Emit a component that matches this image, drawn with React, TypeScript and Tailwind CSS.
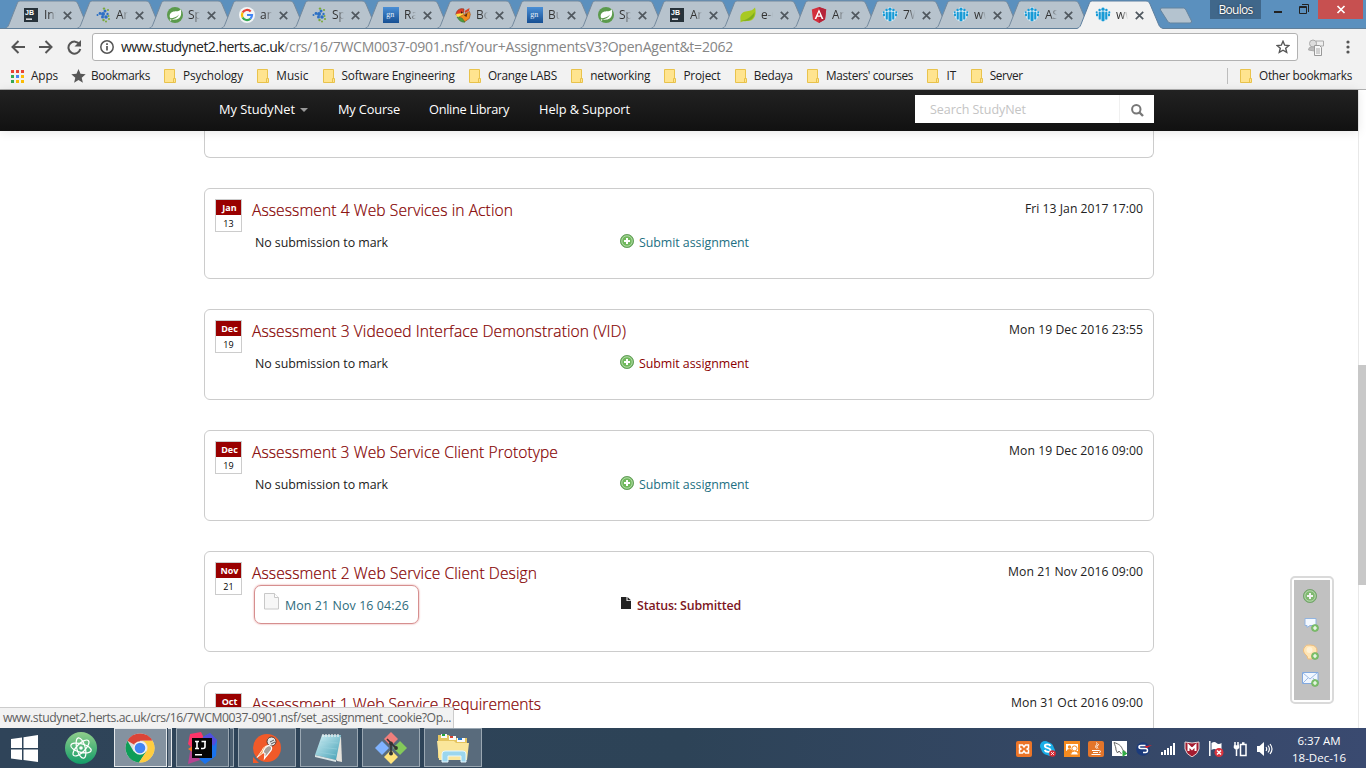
import React, { useLayoutEffect, useRef, useState } from "react";

/* Single line of text whose tracking is adjusted so that it fills the given width. */
function Fit({ w, children, className = "" }: { w: number; children: string; className?: string }) {
  const ref = useRef<HTMLSpanElement>(null);
  const [ls, setLs] = useState(0);
  useLayoutEffect(() => {
    const el = ref.current;
    if (el) setLs((w - el.getBoundingClientRect().width) / children.length);
  }, []);
  return (
    <span className={`block shrink-0 whitespace-pre ${className}`} style={{ width: w }}>
      <span ref={ref} className="inline-block" style={{ letterSpacing: ls }}>{children}</span>
    </span>
  );
}

const JetBrains = () => (
  <svg width="16" height="16" viewBox="0 0 16 16">
    <rect x="1" y="1" width="14" height="14" fill="#27323a" />
    <text x="2" y="7.6" fontSize="7" fontWeight="700" fill="#fff" fontFamily="Liberation Sans, sans-serif">JB</text>
    <rect x="3" y="11.5" width="6" height="1.3" fill="#fff" />
  </svg>
);
const Dots = () => (
  <svg width="16" height="16" viewBox="0 0 16 16">
    <g fill="#2c6fc4">
      <circle cx="8" cy="7" r="2" /><circle cx="11" cy="10" r="1.8" /><circle cx="5" cy="6.5" r="1.4" /><circle cx="10" cy="4" r="1.5" /><circle cx="7.5" cy="10" r="1.5" /><circle cx="12.5" cy="7" r="1.2" /><circle cx="2.5" cy="8" r="1" />
    </g>
    <g fill="#7ba83c">
      <circle cx="9" cy="1.6" r="1.2" /><circle cx="13" cy="3" r="1.1" /><circle cx="14" cy="12" r="1.1" /><circle cx="8.5" cy="13" r="1.2" /><circle cx="11" cy="14.6" r="1" /><circle cx="13.5" cy="9" r="1" />
    </g>
  </svg>
);
const Spring = () => (
  <svg width="16" height="16" viewBox="0 0 16 16">
    <circle cx="8" cy="8" r="8" fill="#5b9a4c" />
    <path d="M13.7 2.2C14.6 6 14.4 9.4 11.6 11.5 9.4 13 6.300 12.700 3.700 12.500 8 12.100 10.800 10.400 12 7.400 9.700 10.100 6.500 11 3.400 11.300 1.700 8.500 3.300 5.200 6.400 4.500 9.100 4 11.900 4.800 13.700 2.200Z" fill="#fff" />
    <circle cx="3.5" cy="13" r=".8" fill="#fff" />
  </svg>
);
const Google = () => (
  <svg width="16" height="16" viewBox="0 0 16 16">
    <circle cx="8" cy="8" r="8" fill="#f4f6f7" />
    <g fill="none" strokeWidth="2.2">
      <path d="M11.700 4.600A5 5 0 0 0 3.600 5.600" stroke="#ea4335" />
      <path d="M3.600 5.600A5 5 0 0 0 3.600 10.400" stroke="#fbbc05" />
      <path d="M3.600 10.400A5 5 0 0 0 11.400 11.700" stroke="#34a853" />
      <path d="M11.400 11.700A5 5 0 0 0 13 8H8" stroke="#4285f4" />
    </g>
  </svg>
);
const Gn = () => (
  <svg width="16" height="16" viewBox="0 0 16 16">
    <defs><linearGradient id="gn" x2="0" y2="1"><stop stopColor="#4a8fd6" /><stop offset="1" stopColor="#164f93" /></linearGradient></defs>
    <rect width="16" height="16" fill="url(#gn)" />
    <text x="3.200" y="10" fontSize="8" fill="#e4eef8" fontFamily="Liberation Serif, serif">gn</text>
  </svg>
);
const Bird = () => (
  <svg width="16" height="16" viewBox="0 0 16 16">
    <path d="M1 8a6 6 0 0 1 8-6L8 7Z" fill="#e03a24" stroke="#8a3a22" strokeWidth=".7" />
    <path d="M1 7l7-1 1 3-7 1Z" fill="#ffe04a" />
    <path d="M4 10L14.500 4.500l.8 3-1 4-5 3.500Z" fill="#f28c1e" stroke="#a14a14" strokeWidth=".6" />
    <path d="M9.500 4l5-3-.5 3-4 2Z" fill="#d94324" />
    <path d="M2 10l5 1 3 4q-5 1-8-5Z" fill="#4f9a3c" stroke="#3b6a2c" strokeWidth=".5" />
    <path d="M9 8.500l3.500-2.500-1 4Z" fill="#5a2c13" />
    <path d="M6 4l2 2-2 .5Z" fill="#3b1c10" />
  </svg>
);
const Leaf = () => (
  <svg width="16" height="16" viewBox="0 0 16 16">
    <path d="M.5 13C-.5 7 3 4.600 7 4.300 11 4 13 3 15 .6 16.500 6 15.500 13.500 8 14 4 14.300 2.500 14 .5 15.400Z" fill="#a8c922" />
    <path d="M1 14C6 13 11 10.500 14.500 5c.5 5-3 8.600-8 8.800Z" fill="#7fae1f" />
  </svg>
);
const Angular = () => (
  <svg width="16" height="16" viewBox="0 0 16 16">
    <path d="M8 0l7.200 2.600L14 12.400 8 16 2 12.400.8 2.600Z" fill="#d32f3c" />
    <path d="M8 0l7.200 2.600L14 12.400 8 16Z" fill="#b5243a" />
    <path d="M8 2.200L3.600 12h1.700l.9-2.200h3.600l.9 2.200h1.700ZM8 5.200l1.300 3.200H6.700Z" fill="#fff" />
  </svg>
);
const People = () => (
  <svg width="16" height="16" viewBox="0 0 16 16">
    <g fill="#dcecf5">
      <circle cx="8" cy="8" r="6.500" /><circle cx="8" cy="2.400" r="2.400" /><circle cx="1.800" cy="6" r="1.800" /><circle cx="14.200" cy="6" r="1.800" />
    </g>
    <g fill="#169ad6">
      <circle cx="8" cy="2.200" r="1.600" /><circle cx="4.600" cy="3" r="1.200" /><circle cx="11.400" cy="3" r="1.200" />
      <rect x="6.500" y="4.400" width="3" height="9.800" rx="1" /><rect x="3.700" y="4.800" width="2.100" height="7.800" rx=".9" /><rect x="10.200" y="4.800" width="2.100" height="7.800" rx=".9" />
      <circle cx="1.700" cy="5.300" r="1" /><circle cx="14.300" cy="5.300" r="1" /><rect x="1" y="6.600" width="2" height="2.600" rx=".7" /><rect x="13" y="6.600" width="2" height="2.600" rx=".7" />
    </g>
  </svg>
);

const tabs: [React.FC, string][] = [
  [JetBrains, "Intr"], [Dots, "Are"], [Spring, "Spr"], [Google, "ang"], [Dots, "Spr"], [Gn, "Rar"], [Bird, "Boc"], [Gn, "Bui"],
  [Spring, "Spr"], [JetBrains, "Ang"], [Leaf, "e-C"], [Angular, "Ang"], [People, "7W"], [People, "ww"], [People, "ASs"], [People, "ww"],
];

function Tab({ Icon, text, active, wide }: { Icon: React.FC; text: string; active: boolean; wide: boolean }) {
  return (
    <div className={`relative flex h-[29px] shrink-0 items-center pl-[16px] ${wide ? "w-[72px]" : "w-[71px]"} ${active ? "z-10" : ""}`}>
      <svg className="absolute top-0 left-[-3px]" width="89" height="29" viewBox="0 0 89 29">
        <path d="M1 28.500C4 27.500 4.500 25.500 5.500 23L13 4C13.600 2 14.500 1 16.500 1H70C72 1 73 2 74 4L82 23C83 25.500 83.500 27.500 87 28.500V29H1Z" fill={active ? "#f2f2f2" : "#b7c3cd"} />
        <path d="M1 28.500C4 27.500 4.500 25.500 5.500 23L13 4C13.600 2 14.500 1 16.500 1H70C72 1 73 2 74 4L82 23C83 25.500 83.500 27.500 87 28.500" fill="none" stroke={active ? "#5d7f9f" : "#74899d"} />
        {!active && <path d="M0 28.500H89" stroke="#617f99" />}
      </svg>
      <span className="relative mt-px flex"><Icon /></span>
      <span className="relative ml-[5px] w-[12px] overflow-hidden text-[12px] whitespace-nowrap text-[#333] [mask-image:linear-gradient(to_right,#000_45%,transparent)]">{text}</span>
      <svg className="relative mt-px ml-[7px] shrink-0" width="9" height="9" viewBox="0 0 9 9"><path d="M.8.8l7.400 7.400M8.200.8L.8 8.200" stroke="#50585f" strokeWidth="1.700" /></svg>
    </div>
  );
}

function TabStrip() {
  return (
    <div className="relative flex h-[29px] bg-[#5b90be] pl-[7px] shadow-[inset_0_-1px_0_#617f99]">
      {tabs.map(([Icon, text], i) => <Tab key={i} Icon={Icon} text={text} active={i === 15} wide={i < 7} />)}
      <svg className="mt-[7px] ml-[9px] shrink-0" width="35" height="18" viewBox="0 0 35 18">
        <path d="M3 1H24.500Q26 1 27 3L32.500 14Q33 16 31 16H11.500Q9.500 16 8.500 14L1.500 3Q.5 1 3 1Z" fill="#b4c3cf" stroke="#65849f" />
      </svg>
      <div className="ml-auto flex shrink-0">
        <div className="flex h-[19px] w-[51px] justify-center bg-[#40678a] text-[12px] leading-[19px] text-white [text-shadow:0_0_2px_#222]"><Fit w={34}>Boulos</Fit></div>
        <svg width="57" height="19" viewBox="0 0 57 19">
          <path d="M13 12h8" stroke="#222" strokeWidth="2" />
          <path d="M38.500 6.500h7v7h-7zM38.500 7.500h7M41 4.500h6.500v7.500" fill="none" stroke="#222" />
        </svg>
        <svg className="mr-[3px] bg-[#c75050]" width="45" height="19" viewBox="0 0 45 19"><path d="M19.500 6l7 7M26.500 6l-7 7" stroke="#fff" strokeWidth="1.700" /></svg>
      </div>
    </div>
  );
}

function Toolbar() {
  return (
    <div className="flex h-[35px] items-center pt-[1px] pl-[11px]">
      <svg width="14" height="14" viewBox="0 0 14 14"><path d="M14 7H1.500M7.500 1L1.500 7l6 6" fill="none" stroke="#555" strokeWidth="2" /></svg>
      <svg className="ml-[14px]" width="14" height="14" viewBox="0 0 14 14"><path d="M0 7h12.500M6.500 1l6 6-6 6" fill="none" stroke="#555" strokeWidth="2" /></svg>
      <svg className="ml-[14px]" width="15" height="15" viewBox="0 0 15 15"><path d="M12.600 4.500A6 6 0 1 0 13.300 9" fill="none" stroke="#555" strokeWidth="2" /><path d="M14 0v6.500H7.500Z" fill="#555" /></svg>
      <div className="ml-[10px] flex h-[28px] w-[1206px] items-center rounded-[3px] border border-[#b2b2b2] bg-white pl-[7px]">
        <svg width="14" height="14" viewBox="0 0 14 14"><circle cx="7" cy="7" r="6.200" fill="none" stroke="#555" strokeWidth="1.500" /><path d="M7 6v4.500M7 3.300v1.600" stroke="#555" strokeWidth="1.700" /></svg>
        <Fit w={163} className="ml-[7px] text-[14px] leading-[20px] text-[#222]">www.studynet2.herts.ac.uk</Fit>
        <Fit w={449} className="text-[14px] leading-[20px] text-[#858585]">/crs/16/7WCM0037-0901.nsf/Your+AssignmentsV3?OpenAgent&t=2062</Fit>
        <svg className="mr-[7px] ml-auto" width="14" height="14" viewBox="0 0 14 14"><path d="M7 1.300l1.700 3.900 4.200.3-3.200 2.700 1 4.200L7 10.200l-3.700 2.200 1-4.200L1.100 5.500l4.200-.3Z" fill="none" stroke="#555" strokeWidth="1.400" /></svg>
      </div>
      <svg className="ml-[10px]" width="17" height="17" viewBox="0 0 17 17">
        <path d="M8 2h7.500v5H8z" fill="#eee" stroke="#aaa" /><circle cx="5" cy="4.500" r="3.500" fill="#ddd" stroke="#aaa" />
        <path d="M.5 11q0-3 3-3h3v4Z" fill="#bbb" stroke="#aaa" /><path d="M6.500 6.500h5l2 2v8h-7z" fill="#f7f7f7" stroke="#999" /><path d="M8 10h4M8 12h4M8 14h4" stroke="#aaa" />
      </svg>
      <svg className="ml-[21px]" width="4" height="14" viewBox="0 0 4 14" fill="#555"><circle cx="2" cy="2" r="1.600" /><circle cx="2" cy="7" r="1.600" /><circle cx="2" cy="12" r="1.600" /></svg>
    </div>
  );
}

const Folder = () => (
  <svg className="mt-px mr-[7px] shrink-0" width="12" height="14" viewBox="0 0 12 14"><path d="M.5.5h10v9h1v4H.5Z" fill="#ffe48f" stroke="#e9c34c" /><path d="M9.500 13V9.500h1.500" fill="none" stroke="#e9c34c" /></svg>
);
const marks: [string, number][] = [["Psychology", 60], ["Music", 32], ["Software Engineering", 113], ["Orange LABS", 69], ["networking", 60], ["Project", 37], ["Bedaya", 39], ["Masters' courses", 87], ["IT", 10], ["Server", 33]];
const appColors = ["#e94335", "#e94335", "#e94335", "#34a853", "#4285f4", "#fbbc05", "#34a853", "#fbbc05", "#fbbc05"];

function Bookmarks() {
  return (
    <div className="flex h-[26px] items-center border-b border-[#b0b0b0] pr-[14px] pb-[4px] pl-[11px] text-[11.800px] text-[#222]">
      <svg className="mt-[3px] mr-[7px]" width="13" height="13" viewBox="0 0 13 13">{appColors.map((c, i) => <rect key={i} x={(i % 3) * 5} y={Math.floor(i / 3) * 5} width="3" height="3" fill={c} />)}</svg>
      <div className="mt-[2px] flex grow items-center">
        <Fit w={27} className="mr-[13px]">Apps</Fit>
        <svg className="mt-px mr-[5px]" width="15" height="14" viewBox="0 0 15 14"><path d="M7.500 0l2 4.800 5.200.5-4 3.400 1.200 5.100-4.400-2.700-4.400 2.700 1.200-5.100-4-3.400 5.200-.5Z" fill="#575757" /></svg>
        <Fit w={59} className="mr-[14px]">Bookmarks</Fit>
        {marks.map(([t, w]) => <div key={t} className="mr-[14.300px] flex items-center"><Folder /><Fit w={w}>{t}</Fit></div>)}
        <div className="mr-[12px] ml-auto h-[16px] w-px bg-[#bdbdbd]" />
        <Folder /><Fit w={93}>Other bookmarks</Fit>
      </div>
    </div>
  );
}

function SiteNav() {
  return (
    <div className="flex h-[41px] w-[1358px] items-start bg-linear-to-b from-[#222] to-[#111] pt-[5px] pl-[219px] shadow-[0_1px_10px_rgba(0,0,0,.1)]">
      <div className="flex h-[30px] items-center text-[12.800px] font-medium text-white">
        <Fit w={76}>My StudyNet</Fit>
        <svg className="mr-[30px] ml-[5px]" width="8" height="4"><path d="M0 0h8L4 4Z" fill="#999" /></svg>
        <Fit w={62} className="mr-[29px]">My Course</Fit>
        <Fit w={80} className="mr-[30px]">Online Library</Fit>
        <Fit w={91}>Help & Support</Fit>
      </div>
      <div className="ml-[285px] flex h-[28px] w-[239px] items-center bg-white">
        <Fit w={96} className="mt-[2px] ml-[15px] text-[12.500px] text-[#c4c4c4]">Search StudyNet</Fit>
        <div className="ml-auto flex h-[28px] w-[35px] items-center border-l border-[#f0f0f0] pt-[2px] pl-[11px]">
          <svg width="13" height="13" viewBox="0 0 13 13"><circle cx="5.300" cy="5.300" r="4.200" fill="none" stroke="#777" strokeWidth="2" /><path d="M8.500 8.500l3.500 3.500" stroke="#777" strokeWidth="2.400" /></svg>
        </div>
      </div>
    </div>
  );
}

const Plus = ({ className = "" }: { className?: string }) => (
  <svg className={className} width="14" height="14" viewBox="0 0 14 14">
    <circle cx="7" cy="7" r="6.600" fill="#77b96a" stroke="#58954c" strokeWidth=".8" /><circle cx="7" cy="7" r="5.200" fill="#70b85c" stroke="#bfe0b5" strokeWidth=".8" />
    <path d="M7 4v6M4 7h6" stroke="#fff" strokeWidth="2" />
  </svg>
);

type Item = { m: string; d: string; title: string; tw: number; due: string; dw: number; link?: string };
const items: Item[] = [
  { m: "Jan", d: "13", title: "Assessment 4 Web Services in Action", tw: 261, due: "Fri 13 Jan 2017 17:00", dw: 118, link: "text-[#226f82]" },
  { m: "Dec", d: "19", title: "Assessment 3 Videoed Interface Demonstration (VID)", tw: 374, due: "Mon 19 Dec 2016 23:55", dw: 134, link: "text-[#8b0000]" },
  { m: "Dec", d: "19", title: "Assessment 3 Web Service Client Prototype", tw: 306, due: "Mon 19 Dec 2016 09:00", dw: 134, link: "text-[#226f82]" },
  { m: "Nov", d: "21", title: "Assessment 2 Web Service Client Design", tw: 285, due: "Mon 21 Nov 2016 09:00", dw: 135 },
  { m: "Oct", d: "31", title: "Assessment 1 Web Service Requirements", tw: 289, due: "Mon 31 Oct 2016 09:00", dw: 132 },
];

function Card({ it }: { it: Item }) {
  return (
    <div className={`flex w-[950px] shrink-0 rounded-[6px] border border-[#ccc] bg-white pt-[10px] pr-[10px] pl-[10px] ${it.link ? "h-[91px]" : "h-[101px]"}`}>
      <div className="h-[33px] w-[27px] shrink-0 border border-[#ccc] text-center text-[9px]">
        <div className="h-[15px] bg-[#900] pl-[2px] leading-[16px] font-bold text-white">{it.m}</div>
        <div className="leading-[18px] text-black">{it.d}</div>
      </div>
      <div className="ml-[10px] flex grow flex-col">
        <div className="flex h-[22px] justify-between">
          <Fit w={it.tw} className="text-[15.600px] leading-[23px] font-light text-[#850000] [-webkit-text-stroke:0.2px_#850000]">{it.title}</Fit>
          <Fit w={it.dw} className="text-[12.200px] leading-[20px] text-[#222]">{it.due}</Fit>
        </div>
        {it.link ? (
          <div className="mt-[11px] flex h-[20px] pl-[3px] text-[12.400px] leading-[22px]">
            <Fit w={133} className="text-[#1a1a1a]">No submission to mark</Fit>
            <Plus className="mt-[2px] ml-[232px]" />
            <Fit w={110} className={`ml-[5px] ${it.link}`}>Submit assignment</Fit>
          </div>
        ) : (
          <div className="flex text-[12.400px] leading-[43px]">
            <div className="mt-px ml-[2px] flex h-[39px] w-[165px] shrink-0 rounded-[7px] border border-[#d68f8f] pl-[9px] leading-[39px] text-[#2d6b7c] shadow-[0_0_2px_#e08a8a]">
              <svg className="mt-[7px] mr-[6px]" width="15" height="17" viewBox="0 0 15 17"><path d="M.5.500h10l4 4v11.500h-14Z" fill="#f7f7f7" stroke="#c8c8c8" /><path d="M10.500.5v4h4" fill="#fff" stroke="#c8c8c8" /></svg>
              <Fit w={124}>Mon 21 Nov 16 04:26</Fit>
            </div>
            <svg className="mt-[13px] mr-[6px] ml-[202px]" width="10" height="12" viewBox="0 0 10 12"><path d="M0 0h5.500v4H10v8H0ZM6.500 0L10 3.200H6.500Z" fill="#222" /></svg>
            <Fit w={104} className="font-semibold text-[#7d1622]">Status: Submitted</Fit>
          </div>
        )}
      </div>
    </div>
  );
}

function SidePanel() {
  const badge = <g><circle cx="13" cy="12" r="3.500" fill="#7ec46c" stroke="#69a85b" strokeWidth=".6" /><path d="M13 10v4M11 12h4" stroke="#fff" strokeWidth="1.200" /></g>;
  return (
    <div className="absolute top-[445px] left-[1290px] flex h-[128px] w-[44px] rounded-[5px] border-2 border-[#dadada] bg-white p-[2px]">
      <div className="flex grow flex-col items-center bg-[#c1c1c1] pt-[9px] pr-[4px]">
        <Plus className="mb-[13px] opacity-80" />
        <svg className="mb-[11px]" width="17" height="17" viewBox="0 0 17 17"><path d="M3 2.500h11v7H8l-3 2v-2H3Z" fill="#f4f9ff" stroke="#92b4e0" />{badge}</svg>
        <svg className="mb-[10px]" width="17" height="17" viewBox="0 0 17 17"><path d="M5 12Q0 8 2 4t6-3q7 0 7 6-1 5-5 5v3H6Z" fill="#ffe5b5" stroke="#efbd7c" /><circle cx="7.500" cy="6" r="3" fill="#fff2d6" />{badge}</svg>
        <svg width="17" height="17" viewBox="0 0 17 17"><path d="M.5 1.500h15.500v11H.5Z" fill="#f1f7ff" stroke="#82a9df" /><path d="M1 2l7 6 7-6M1 12l5-5M15 12l-4-5" fill="none" stroke="#9dbbe5" />{badge}</svg>
      </div>
    </div>
  );
}

function TaskButton({ children, stack, active }: { children: React.ReactNode; stack?: boolean; active?: boolean }) {
  return (
    <div className="mr-[4px] flex w-[58px] gap-px">
      <div className={`flex h-[39px] grow items-center justify-center border ${active ? "border-[#e4e8eb] bg-[#8492a0]" : "border-[#9aa7b2] bg-[#596b7c]"}`}>{children}</div>
      {stack && <div className={`h-[39px] w-[4px] border border-l-0 ${active ? "border-[#e4e8eb] bg-[#6d7c8c]" : "border-[#9aa7b2] bg-[#4b5e70]"}`} />}
    </div>
  );
}

const Tray = () => (
  <svg width="260" height="16" viewBox="0 0 260 16">
    <rect width="16" height="16" rx="2" fill="#ec7528" /><path d="M3.500 4h3L8 6l1.500-2h3v3L11 8l1.500 1v3h-3L8 10l-1.500 2h-3V9L5 8 3.500 7Z" fill="none" stroke="#fff" strokeWidth="1.500" />
    <g transform="translate(24)"><circle cx="5" cy="5" r="5" fill="#19aee8" /><circle cx="10" cy="10" r="5" fill="#19aee8" /><circle cx="7.500" cy="7.500" r="6.300" fill="#19aee8" /><path d="M10.500 5C9.500 3 5 2.800 4.800 5c0 2.400 5.800 1.600 5.800 4.300 0 2.200-4.800 2.200-6-.3" fill="none" stroke="#fff" strokeWidth="1.800" /><circle cx="12.500" cy="12.500" r="3.300" fill="#d82b36" /><path d="M11.200 11.200l2.600 2.600M13.800 11.200l-2.600 2.600" stroke="#fff" /></g>
    <g transform="translate(48)"><rect width="16" height="16" fill="#f58b1f" /><path d="M2 3h12v7H2Z" fill="#fff" /><circle cx="5.500" cy="6" r="1.700" fill="#f58b1f" /><path d="M2.500 10.500q0-2.500 3-2.500t3 2.500Z" fill="#f58b1f" /><circle cx="10.500" cy="7.500" r="2.600" fill="#fff" stroke="#f58b1f" /><path d="M6.500 14q0-4 4-4t4 4Z" fill="#fff" stroke="#f58b1f" /></g>
    <g transform="translate(72)"><rect width="16" height="16" rx="2" fill="#e3752a" /><path d="M8.500 1.500c2 2-2.500 3 0 6M11 3.500C8 5 9 6 10 7.500M4 9.500h7.500q2 0 0 2.500M5 11.500h5M3.500 13.500h9" fill="none" stroke="#fff" /></g>
    <g transform="translate(96)"><rect width="15" height="15" fill="#fff" /><path d="M2 1.500C7 3 9.500 5 10.500 8.500l3 2.500-3 .2M2 1.500C3 5 4 6 4 9l1.500 3 1.500-2 2.500 3" fill="none" stroke="#666" /><path d="M10.500 9l5 3.500-5 3.500Z" fill="#31ae45" /></g>
    <g transform="translate(120)"><circle cx="7" cy="8" r="6.800" fill="#1b3b7c" /><path d="M9.500 4.500H5q-2 0-2 1.500t2 1.500h4.500q2 0 2 2t-2 2H7" fill="none" stroke="#fff" strokeWidth="1.500" /><path d="M8 5.500L16 4l-5 3Z" fill="#d9232d" /></g>
    <g transform="translate(145)" fill="#fff"><rect y="11" width="2" height="3" /><rect x="3" y="9" width="2" height="5" /><rect x="6" y="7" width="2" height="7" /><rect x="9" y="5" width="2" height="9" /><rect x="12" y="2" width="2" height="12" /></g>
    <g transform="translate(169)"><path d="M0 1l7 1 7-1v7q-1 5-7 8-6-3-7-8Z" fill="#a51c30" stroke="#e8d8da" /><path d="M3.500 10V4.500L7 8l3.500-3.500V10" fill="none" stroke="#fff" strokeWidth="2" /></g>
    <g transform="translate(193)"><path d="M.8 0v15" stroke="#fff" strokeWidth="1.500" /><path d="M2.500 2q3-2 5 0t5 0v7q-3 2-5 0t-5 0Z" fill="#fff" /><circle cx="10" cy="11.500" r="4.500" fill="#d9333d" /><path d="M8 9.500l4 4M12 9.500l-4 4" stroke="#fff" strokeWidth="1.500" /></g>
    <g transform="translate(217)" fill="none" stroke="#fff" strokeWidth="1.500"><path d="M7.500 3.500H13v11H7.500zM9 2h2.500M2 1v4M5 1v4M3.500 9v6" /><path d="M1 4.500h5V7L3.500 9 1 7Z" fill="#fff" strokeWidth=".5" /></g>
    <g transform="translate(241)"><path d="M0 5h2.500L7 1v14l-4.500-4H0Z" fill="#fff" /><path d="M9 6q1.500 2 0 4M11 4.500q2.800 3.500 0 7M13 3q4 5 0 10" fill="none" stroke="#fff" strokeWidth="1.200" /></g>
  </svg>
);

function Taskbar() {
  return (
    <div className="flex h-[40px] bg-linear-to-r from-[#2f4459] via-[#2d4357] to-[#3a4a70]">
      <div className="flex h-full w-[52px] items-center justify-center pr-[3px]"><svg width="27" height="27" viewBox="0 0 27 27" fill="#fff"><path d="M0 4l11-1.500V13H0ZM12.500 2.300L27 0v13H12.500ZM0 14.500h11V25L0 23.500ZM12.500 14.500H27V27l-14.500-2Z" /></svg></div>
      <div className="mr-[1px] flex w-[61px] items-center justify-center">
        <svg className="-ml-1" width="32" height="32" viewBox="0 0 32 32"><defs><linearGradient id="atom" x2="0" y2="1"><stop stopColor="#90ce8b" /><stop offset="1" stopColor="#129c68" /></linearGradient></defs><circle cx="16" cy="16" r="16" fill="url(#atom)" />
          <g fill="none" stroke="#fff" strokeWidth="1.200"><ellipse cx="16" cy="16" rx="10.500" ry="4.200" transform="rotate(15 16 16)" /><ellipse cx="16" cy="16" rx="10.500" ry="4.200" transform="rotate(75 16 16)" /><ellipse cx="16" cy="16" rx="10.500" ry="4.200" transform="rotate(135 16 16)" /></g><circle cx="16" cy="16" r="1.800" fill="#fff" /></svg>
      </div>
      <TaskButton stack active>
        <svg className="-ml-[2px]" width="30" height="30" viewBox="0 0 30 30"><circle cx="15" cy="15" r="14.500" fill="#ddd" /><path d="M15 15L2.440 7.750A14.500 14.500 0 0 1 27.560 7.750H15Z" fill="#db4437" /><path d="M2.440 7.750A14.500 14.500 0 0 0 14 29.500L21.300 18.600 15 15 8.700 18.600Z" fill="#0f9d58" /><path d="M27.560 7.750A14.500 14.500 0 0 1 14 29.500L21.300 18.600A7 7 0 0 0 15 7.750Z" fill="#ffcd40" /><circle cx="15" cy="15" r="6.800" fill="#f1f1f1" /><circle cx="15" cy="15" r="5.300" fill="#4285f4" /></svg>
      </TaskButton>
      <TaskButton stack>
        <svg className="-ml-[2px]" width="32" height="32" viewBox="0 0 32 32"><path d="M4 2l11-2 4 8L8 18 2 12Z" fill="#fc3569" /><path d="M17 5l7-4 7 7-1 16-11 8-9-8Z" fill="#1a73ed" /><path d="M17 5l7-4 7 7-3 6Z" fill="#544ddb" /><path d="M4 20l4-7 6 15-12 4Z" fill="#b64391" /><path d="M2 17l6-4v8Z" fill="#f77a28" /><rect x="6" y="6" width="20" height="20" fill="#050505" /><path d="M9 9.500h4M11 9.500v7M9 16.500h4M15.500 9.500h4.500M19 9.500v5q0 2-2 2h-2" fill="none" stroke="#fff" strokeWidth="1.600" /><rect x="9" y="22" width="7" height="1.500" fill="#fff" /></svg>
      </TaskButton>
      <TaskButton>
        <svg width="30" height="30" viewBox="0 0 30 30"><circle cx="15" cy="15" r="14" fill="#f15a29" /><path d="M1 24v6h6Z" fill="#f15a29" /><circle cx="19.500" cy="8.500" r="4.500" fill="#e6e6e6" stroke="#57392e" /><path d="M18 9l4-2M19 11l4-2" stroke="#555" /><path d="M17 12.500q-5 0-7 5l-5 7 6-4.500" fill="#f6a04d" stroke="#fff" strokeWidth=".8" /><path d="M17 12.500q4 1 2 5l-5 6-1.500 2 .5-5-2-1q1-5 6-7Z" fill="#a8a09a" stroke="#fff" strokeWidth="1.200" /></svg>
      </TaskButton>
      <TaskButton>
        <svg width="32" height="32" viewBox="0 0 32 32"><defs><linearGradient id="pad" x2="1" y2="1"><stop stopColor="#d5f1f6" /><stop offset="1" stopColor="#3f9eb4" /></linearGradient></defs><path d="M9 4l19 1 1 25-5-1Z" fill="#e6e3dc" /><path d="M9 3h19l-5 25-21-5Z" fill="url(#pad)" /><path d="M2 23l21 5v2L2 25Z" fill="#d8e4e5" /><path d="M10 2v3M13 2v3M16 2v3M19 2v3M22 2v3M25 2v3" stroke="#e8edef" strokeWidth="1.300" /><path d="M8 10l17 1M6 15l18 2M5 20l18 3" stroke="#9ad2dd" strokeWidth=".6" /></svg>
      </TaskButton>
      <TaskButton>
        <svg width="32" height="32" viewBox="0 0 32 32"><path d="M16 0l7 7-7 7-7-7Z" fill="#f07f7c" /><path d="M7 9l7 7-7 7-7-7Z" fill="#80b3ff" /><path d="M25 9l7 7-7 7-7-7Z" fill="#84c95a" /><path d="M16 18l7 7-7 7-7-7Z" fill="#ffe37a" /><path d="M12 7l4 4v11M16 11l5 5" fill="none" stroke="#333" strokeWidth="1.600" /><circle cx="16" cy="11.500" r="1.900" fill="#333" /><circle cx="16" cy="21.500" r="2" fill="#333" /><circle cx="21" cy="16" r="1.900" fill="#333" /></svg>
      </TaskButton>
      <TaskButton>
        <svg width="32" height="30" viewBox="0 0 32 30"><path d="M1 2h11l2 3h16v20H1Z" fill="#e5c55f" /><path d="M4 1h6v4H4Z" fill="#fafafa" /><path d="M5 1h3v2H5Z" fill="#23a33b" /><path d="M12 3h7v4h-7Z" fill="#fafafa" /><path d="M13 3h3v2h-3Z" fill="#d7402f" /><path d="M20 5h8v4h-8Z" fill="#fafafa" /><path d="M21 5h4v2h-4Z" fill="#2878c9" /><path d="M0 8h17l2 2h13l-2 17H2Z" fill="#fae69b" /><path d="M5 29V21q0-3 3-3h18q3 0 3 3v8h-5v-6H11v6Z" fill="#9bd6ee" stroke="#e4f6fc" /></svg>
      </TaskButton>
      <div className="ml-auto flex shrink-0 items-center pt-[2px]"><Tray /></div>
      <div className="ml-[8px] flex w-[82px] flex-col items-center pr-[12px] pt-[4px] text-[11.500px] leading-[17px] text-white">
        <Fit w={43}>6:37 AM</Fit><Fit w={54}>18-Dec-16</Fit>
      </div>
    </div>
  );
}

export default function App() {
  return (
    <div className="flex h-[768px] w-[1366px] flex-col overflow-hidden bg-[#f2f2f2] font-['Open_Sans','Noto_Sans',sans-serif]">
      <TabStrip />
      <Toolbar />
      <Bookmarks />
      <div className="relative z-0 flex h-[638px] bg-white">
        <div className="flex w-[1358px] flex-col">
          <div className="relative z-10"><SiteNav /></div>
          <div className="relative flex h-[597px] flex-col gap-[30px] overflow-hidden pl-[204px]">
            <div className="h-[27px] w-[950px] shrink-0 rounded-b-[6px] border border-t-0 border-[#ccc]" />
            {items.map((it) => <Card key={it.title} it={it} />)}
            <SidePanel />
            <div className="absolute bottom-0 left-0 h-[21px] w-[454px] rounded-tr-[2px] border-t border-r border-[#ccc] bg-[#f2f2f2] pl-[3px] text-[12.200px] leading-[20px] text-[#5e5e5e]">
              <Fit w={448}>www.studynet2.herts.ac.uk/crs/16/7WCM0037-0901.nsf/set_assignment_cookie?Op...</Fit>
            </div>
          </div>
        </div>
        <div className="w-[8px] border-l border-[#e8e8e8] bg-white pt-[275px]"><div className="-ml-px h-[220px] w-[8px] bg-[#c8c8c8]" /></div>
      </div>
      <Taskbar />
    </div>
  );
}
